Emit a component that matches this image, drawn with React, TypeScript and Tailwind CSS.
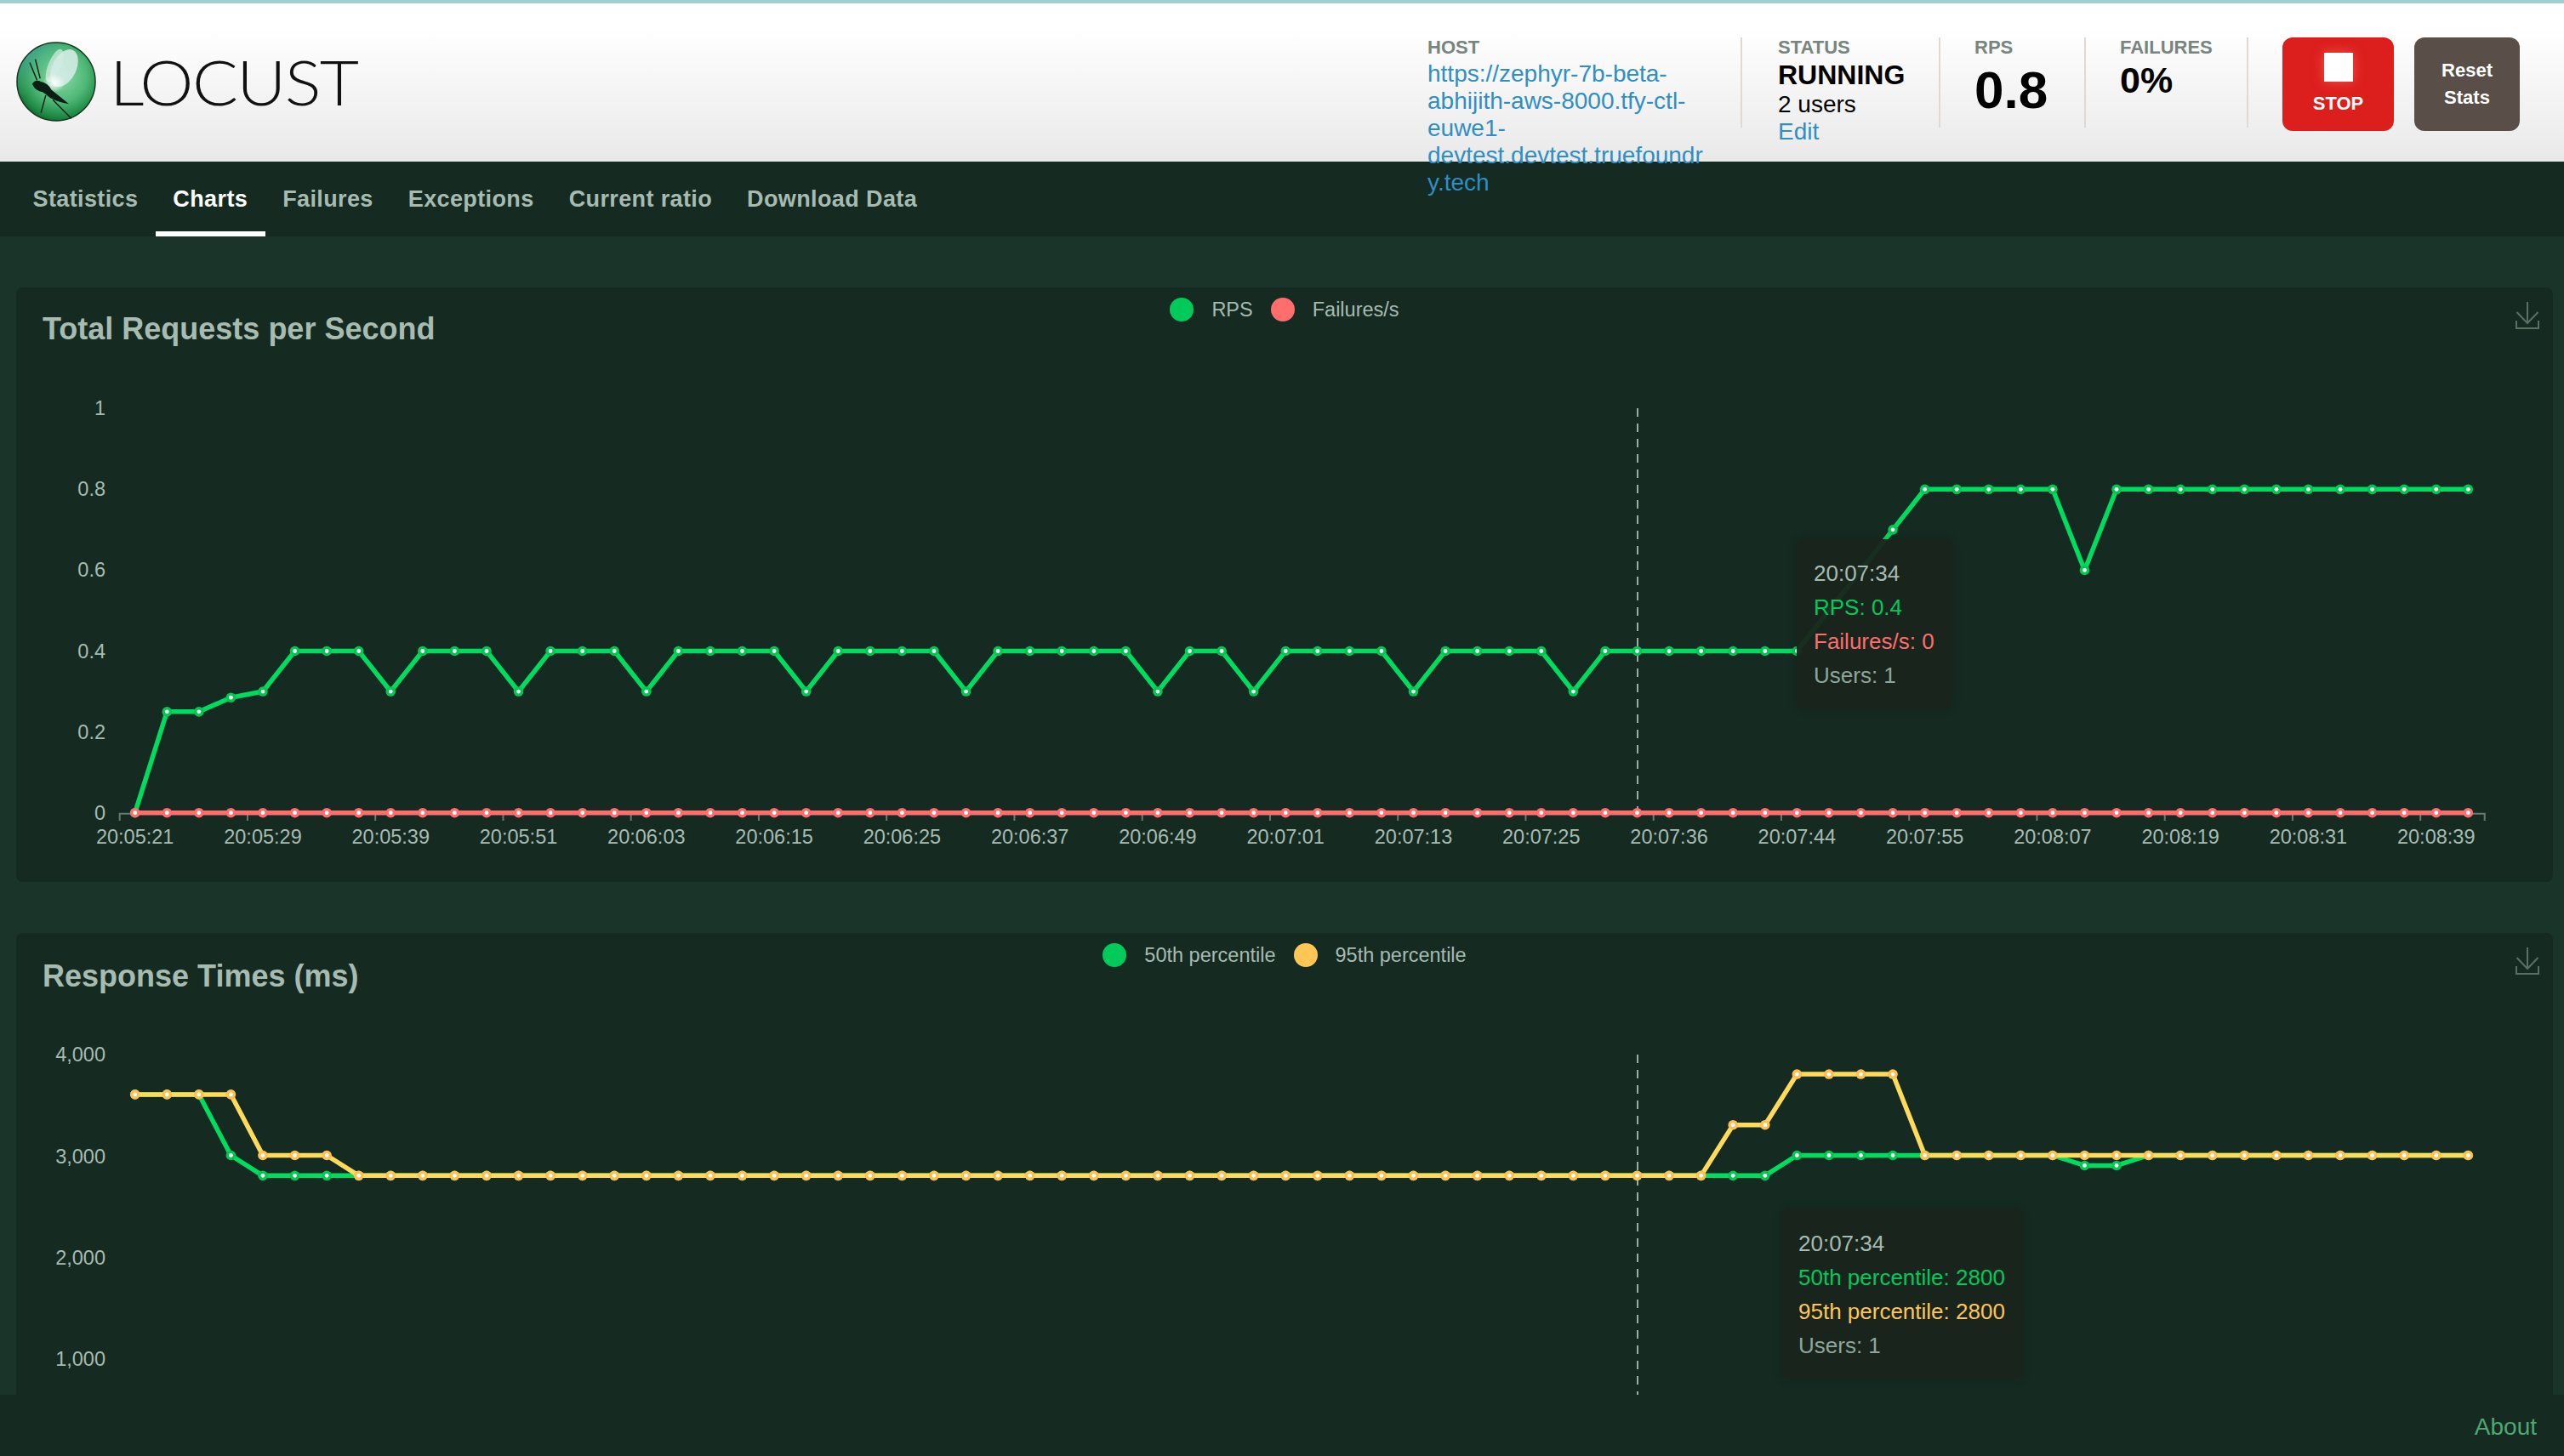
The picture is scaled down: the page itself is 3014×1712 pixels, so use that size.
import type { ReactNode } from 'react'

const tabs = ['Statistics', 'Charts', 'Failures', 'Exceptions', 'Current ratio', 'Download Data']

const xLabels = [
  '20:05:21', '20:05:29', '20:05:39', '20:05:51', '20:06:03', '20:06:15', '20:06:25', '20:06:37', '20:06:49', '20:07:01',
  '20:07:13', '20:07:25', '20:07:36', '20:07:44', '20:07:55', '20:08:07', '20:08:19', '20:08:31', '20:08:39',
]

const POINTS = 74
const xAt = (i: number) => 158.7 + i * 37.57

const fill = (value: number, overrides: Record<number, number>) =>
  Array.from({ length: POINTS }, (_, i) => (i in overrides ? overrides[i] : value))

const after = (from: number, to: number, value: number) =>
  Object.fromEntries(Array.from({ length: to - from + 1 }, (_, i) => [from + i, value]))

const rps = fill(0.4, {
  0: 0, 1: 0.25, 2: 0.25, 3: 0.285, 4: 0.3, 8: 0.3, 12: 0.3, 16: 0.3, 21: 0.3, 26: 0.3, 32: 0.3, 35: 0.3, 40: 0.3, 45: 0.3,
  53: 0.5, 54: 0.6, 55: 0.7, ...after(56, 73, 0.8), 61: 0.6,
})
const failures = fill(0, {})

const p50 = fill(2800, { 0: 3600, 1: 3600, 2: 3600, 3: 3000, ...after(52, 73, 3000), 61: 2900, 62: 2900 })
const p95 = fill(2800, {
  0: 3600, 1: 3600, 2: 3600, 3: 3600, 4: 3000, 5: 3000, 6: 3000, 50: 3300, 51: 3300,
  52: 3800, 53: 3800, 54: 3800, 55: 3800, ...after(56, 73, 3000),
})

function Series({ values, toY, line, dot }: { values: number[]; toY: (v: number) => number; line: string; dot: string }) {
  const points = values.map((v, i) => `${xAt(i)},${toY(v)}`).join(' ')
  return (
    <g>
      <polyline points={points} fill="none" stroke={line} strokeWidth={5.5} strokeLinejoin="round" />
      {values.map((v, i) => (
        <g key={i}>
          <circle cx={xAt(i)} cy={toY(v)} r={5.8} fill={dot} />
          <circle cx={xAt(i)} cy={toY(v)} r={2.4} fill="#ffffff" />
        </g>
      ))}
    </g>
  )
}

function DownloadIcon() {
  return (
    <svg width="28" height="32" viewBox="0 0 28 32" fill="none" stroke="#5b6f63" strokeWidth="2">
      <path d="M14 0V25" />
      <path d="M1.500 12L14 25L26.500 12" />
      <path d="M1 22V31H27V22" />
    </svg>
  )
}

function Legend({ items }: { items: { label: string; color: string }[] }) {
  return (
    <div className="flex h-[40px] items-center gap-[21px] pt-[12px] text-[23.500px] leading-[28px] text-[#a7bbb1]">
      {items.map((item) => (
        <div key={item.label} className="flex items-center gap-[21px]">
          <span className="h-[28px] w-[28px] rounded-full" style={{ backgroundColor: item.color }} />
          <span>{item.label}</span>
        </div>
      ))}
    </div>
  )
}

function ChartCard({ title, titleClass, legend, children, tooltip }: {
  title: string
  titleClass: string
  legend: { label: string; color: string }[]
  children: ReactNode
  tooltip: ReactNode
}) {
  return (
    <section className="relative w-[2982px] shrink-0 rounded-[8px] bg-[#152a21]">
      <div className="grid h-[100px] grid-cols-[1fr_auto_1fr] items-start">
        <h2 className={`pl-[31px] text-[36px] font-bold leading-[36px] text-[#a7bbb1] ${titleClass}`}>{title}</h2>
        <Legend items={legend} />
        <div className="flex justify-end pr-[16px] pt-[17px]">
          <DownloadIcon />
        </div>
      </div>
      {children}
      {tooltip}
    </section>
  )
}

function Tooltip({ className, lines }: { className: string; lines: { text: string; color: string }[] }) {
  return (
    <div className={`absolute rounded-[8px] bg-[#19251c]/95 py-[20px] text-[26px] leading-[40px] whitespace-nowrap shadow-[0_0_12px_rgba(0,0,0,0.15)] ${className}`}>
      {lines.map((line) => (
        <div key={line.text} style={{ color: line.color }}>{line.text}</div>
      ))}
    </div>
  )
}

function RequestsChart() {
  const toY = (v: number) => 955.7 - v * 475.5
  return (
    <svg className="block" width="2982" height="599" viewBox="19 438 2982 599" fontSize="23.5" fill="#a7bbb1">
      {[0, 0.2, 0.4, 0.6, 0.8, 1].map((v) => (
        <text key={v} x="124" y={toY(v) + 8} textAnchor="end">{v}</text>
      ))}
      <path d="M140.700 965V956.700H2920.700V965" fill="none" stroke="#6a7a6f" strokeWidth="2" />
      {xLabels.map((label, i) => (
        <g key={label}>
          {i > 0 && <path d={`M${140.7 + i * 150.25} 957V965`} stroke="#6a7a6f" strokeWidth="2" />}
          <text x={xAt(i * 4)} y="992" textAnchor="middle">{label}</text>
        </g>
      ))}
      <path d="M1925 480V956" stroke="#ccd8d2" strokeWidth="1.500" strokeDasharray="10 8" />
      <Series values={rps} toY={toY} line="#00dc5f" dot="#00c853" />
      <Series values={failures} toY={toY} line="#ff6d6d" dot="#ff6d6d" />
    </svg>
  )
}

function ResponseChart() {
  const toY = (v: number) => 1358.5 - (v - 3000) * 0.1193
  return (
    <svg className="block" width="2982" height="599" viewBox="19 1197 2982 599" fontSize="23.5" fill="#a7bbb1">
      {[1000, 2000, 3000, 4000].map((v) => (
        <text key={v} x="124" y={toY(v) + 9} textAnchor="end">{v.toLocaleString('en-US')}</text>
      ))}
      <path d="M1925 1240V1640" stroke="#ccd8d2" strokeWidth="1.500" strokeDasharray="10 8" />
      <Series values={p50} toY={toY} line="#00dc5f" dot="#00c853" />
      <Series values={p95} toY={toY} line="#ffdb5c" dot="#ffc04f" />
    </svg>
  )
}

function LocustLogo() {
  return (
    <svg width="94" height="94" viewBox="0 0 100 100" className="shrink-0">
      <defs>
        <radialGradient id="orb" cx="55%" cy="42%" r="62%">
          <stop offset="0%" stopColor="#8edbaa" />
          <stop offset="55%" stopColor="#4fb877" />
          <stop offset="85%" stopColor="#1f8a45" />
          <stop offset="100%" stopColor="#0d5e2e" />
        </radialGradient>
        <linearGradient id="rim" x1="0" y1="0" x2="1" y2="1">
          <stop offset="0%" stopColor="#4a9fc8" />
          <stop offset="40%" stopColor="#4fb877" stopOpacity="0" />
        </linearGradient>
        <radialGradient id="glow" cx="50%" cy="50%" r="50%">
          <stop offset="0%" stopColor="#ffffff" />
          <stop offset="100%" stopColor="#ffffff" stopOpacity="0" />
        </radialGradient>
      </defs>
      <circle cx="50" cy="50" r="49" fill="url(#orb)" stroke="#16331f" strokeWidth="1.500" />
      <circle cx="50" cy="50" r="48" fill="url(#rim)" />
      <ellipse cx="48" cy="30" rx="8" ry="22" transform="rotate(22 48 30)" fill="#cfe9df" fillOpacity="0.75" />
      <ellipse cx="60" cy="33" rx="15" ry="25" transform="rotate(26 60 33)" fill="#d3ebe4" fillOpacity="0.9" />
      <ellipse cx="47" cy="52" rx="14" ry="12" fill="url(#glow)" />
      <path d="M20 53Q24 46 31 50Q40 52 44 60L66 78Q52 76 42 70Q38 66 33 63Q24 62 20 53Z" fill="#0a1f14" />
      <path d="M17 26L26 48M24 22L30 46M37 67L31 89M46 73L69 96" stroke="#0a1f14" strokeWidth="1.500" fill="none" />
    </svg>
  )
}

export default function App() {
  return (
    <div className="flex h-screen flex-col overflow-hidden bg-[#1a3429] font-['Liberation_Sans',Arial,sans-serif]">
      <header className="relative z-10 flex h-[190px] shrink-0 items-start border-t-[4px] border-[#9fcfcf] bg-gradient-to-b from-white from-[15%] to-[#e9e9e9] pl-[19px] pr-[52px]">
        <div className="mt-[45px] flex items-center gap-[16px]">
          <LocustLogo />
          <span className="origin-left scale-x-[1.11] font-['Lato',sans-serif] text-[72px] font-light leading-[72px] tracking-[-1.500px] text-[#111111]">LOCUST</span>
        </div>
        <div className="ml-auto mt-[40px] flex items-start">
          <div className="h-[106px] w-[370px] border-r-2 border-[#e0d8d2]">
            <div className="text-[22px] font-bold leading-[24px] text-[#78857e]">HOST</div>
            <a className="mt-[3px] block w-[330px] text-[28px] leading-[32px] text-[#2f8fc4] [overflow-wrap:anywhere]">
              https://zephyr-7b-beta-abhijith-aws-8000.tfy-ctl-euwe1-devtest.devtest.truefoundry.tech
            </a>
          </div>
          <div className="h-[106px] w-[233px] border-r-2 border-[#e0d8d2] pl-[42px]">
            <div className="text-[22px] font-bold leading-[24px] text-[#78857e]">STATUS</div>
            <div className="mt-[2px] text-[32px] font-bold leading-[36px] text-black">RUNNING</div>
            <div className="mt-[1px] text-[28px] leading-[32px] text-black">2 users</div>
            <a className="block text-[28px] leading-[32px] text-[#2f8fc4]">Edit</a>
          </div>
          <div className="h-[106px] w-[171px] border-r-2 border-[#e0d8d2] pl-[40px]">
            <div className="text-[22px] font-bold leading-[24px] text-[#78857e]">RPS</div>
            <div className="mt-[7px] text-[62px] font-bold leading-[62px] text-black">0.8</div>
          </div>
          <div className="h-[106px] w-[191px] border-r-2 border-[#e0d8d2] pl-[40px]">
            <div className="text-[22px] font-bold leading-[24px] text-[#78857e]">FAILURES</div>
            <div className="mt-[4px] text-[43px] font-bold leading-[44px] text-black">0%</div>
          </div>
          <button className="ml-[40px] flex h-[110px] w-[131px] flex-col items-center rounded-[12px] bg-[#dc1f1c] pt-[18px] text-[22px] font-bold text-white">
            <span className="h-[34px] w-[34px] bg-white shadow-[0_0_14px_rgba(255,130,120,0.55)]" />
            <span className="mt-[12px] leading-[28px]">STOP</span>
          </button>
          <button className="ml-[24px] h-[110px] w-[124px] rounded-[12px] bg-[#5a4f48] text-[22px] font-bold leading-[32px] text-white">
            <div>Reset</div>
            <div>Stats</div>
          </button>
        </div>
      </header>

      <nav className="flex h-[88px] shrink-0 bg-[#152a21] pl-[18px]">
        {tabs.map((tab) => (
          <div
            key={tab}
            className={`flex items-center border-b-[6px] px-[20.500px] pt-[6px] text-[27px] font-bold tracking-[0.380px] ${tab === 'Charts' ? 'border-white text-white' : 'border-transparent text-[#a7bbb1]'}`}
          >
            {tab}
          </div>
        ))}
      </nav>

      <main className="flex min-h-0 flex-1 flex-col gap-[60px] overflow-hidden pl-[19px] pt-[60px]">
        <ChartCard
          title="Total Requests per Second"
          titleClass="pt-[31px]"
          legend={[{ label: 'RPS', color: '#00ca5a' }, { label: 'Failures/s', color: '#ff6d6d' }]}
          tooltip={
            <Tooltip
              className="left-[2093px] top-[296px] h-[199px] w-[182px] pl-[20px]"
              lines={[
                { text: '20:07:34', color: '#a7bbb1' },
                { text: 'RPS: 0.4', color: '#00ca5a' },
                { text: 'Failures/s: 0', color: '#ff6d6d' },
                { text: 'Users: 1', color: '#8fa59b' },
              ]}
            />
          }
        >
          <RequestsChart />
        </ChartCard>
        <ChartCard
          title="Response Times (ms)"
          titleClass="pt-[33px]"
          legend={[{ label: '50th percentile', color: '#00ca5a' }, { label: '95th percentile', color: '#ffc656' }]}
          tooltip={
            <Tooltip
              className="left-[2076px] top-[325px] h-[200px] w-[282px] pl-[19px]"
              lines={[
                { text: '20:07:34', color: '#a7bbb1' },
                { text: '50th percentile: 2800', color: '#00ca5a' },
                { text: '95th percentile: 2800', color: '#ffc656' },
                { text: 'Users: 1', color: '#8fa59b' },
              ]}
            />
          }
        >
          <ResponseChart />
        </ChartCard>
      </main>

      <footer className="flex h-[72px] shrink-0 items-center justify-end bg-[#152a21] pr-[32px] pt-[4px] text-[28px] text-[#4fa873]">
        About
      </footer>
    </div>
  )
}
